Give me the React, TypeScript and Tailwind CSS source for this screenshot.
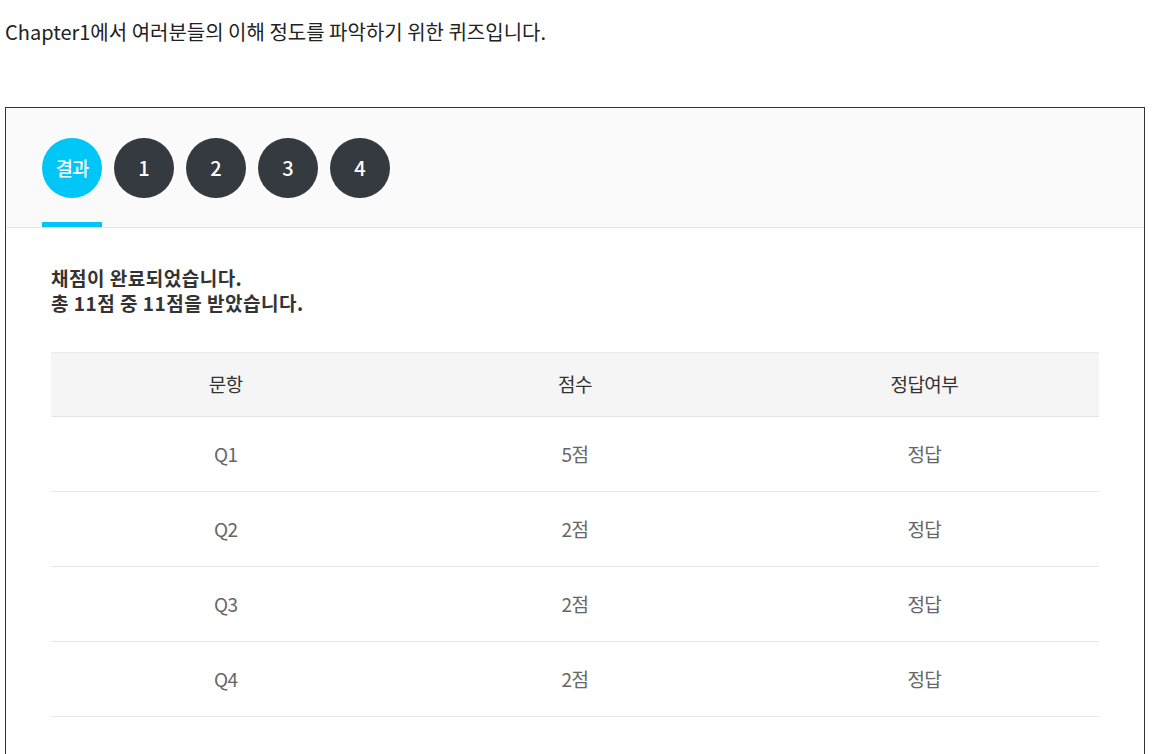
import React from "react";

const rows = [
  { q: "Q1", s: "5점", r: "정답" },
  { q: "Q2", s: "2점", r: "정답" },
  { q: "Q3", s: "2점", r: "정답" },
  { q: "Q4", s: "2점", r: "정답" },
];

export default function App() {
  return (
    <div
      className="min-h-[754px] bg-white text-[#222]"
      style={{ fontFamily: '"Noto Sans CJK KR", "Noto Sans", sans-serif' }}
    >
      <p className="pl-[5px] pt-[18px] text-[20px] leading-[28px] tracking-[0px] text-[#222]">
        Chapter1에서 여러분들의 이해 정도를 파악하기 위한 퀴즈입니다.
      </p>
      <div className="ml-[5px] mt-[61px] w-[1140px] border border-[#333] min-h-[700px]">
        <div className="bg-[#fafafa] border-b border-[#e5e5e5] pl-[36px] pt-[30px]">
          <div className="flex gap-[12px]">
            <div className="flex flex-col items-center">
              <div className="w-[60px] h-[60px] rounded-full bg-[#00c6f7] text-white flex items-center justify-center text-[19px] font-medium tracking-[-1px]">
                결과
              </div>
              <div className="mt-[24px] w-[60px] h-[5px] bg-[#00c6f7]" />
            </div>
            {["1", "2", "3", "4"].map((n) => (
              <div key={n} className="flex flex-col items-center">
                <div className="w-[60px] h-[60px] rounded-full bg-[#343a40] text-white flex items-center justify-center text-[20px] font-medium">
                  {n}
                </div>
              </div>
            ))}
          </div>
        </div>
        <div className="px-[45px] pt-[37px]">
          <div className="text-[19px] leading-[25px] font-bold tracking-[0.5px] text-[#333]">
            <p>채점이 완료되었습니다.</p>
            <p>총 11점 중 11점을 받았습니다.</p>
          </div>
          <div className="mt-[37px]">
            <div className="grid grid-cols-3 h-[65px] bg-[#f5f5f5] border-t border-[#eaeaea] border-b border-b-[#e5e5e5] items-center text-center text-[19px] text-[#333] tracking-[-0.6px]">
              <div>문항</div>
              <div>점수</div>
              <div>정답여부</div>
            </div>
            {rows.map((r) => (
              <div
                key={r.q}
                className="grid grid-cols-3 h-[75px] border-b border-[#e8e8e8] items-center text-center text-[19px] text-[#666] tracking-[-0.6px]"
              >
                <div>{r.q}</div>
                <div>{r.s}</div>
                <div>{r.r}</div>
              </div>
            ))}
          </div>
        </div>
      </div>
    </div>
  );
}
